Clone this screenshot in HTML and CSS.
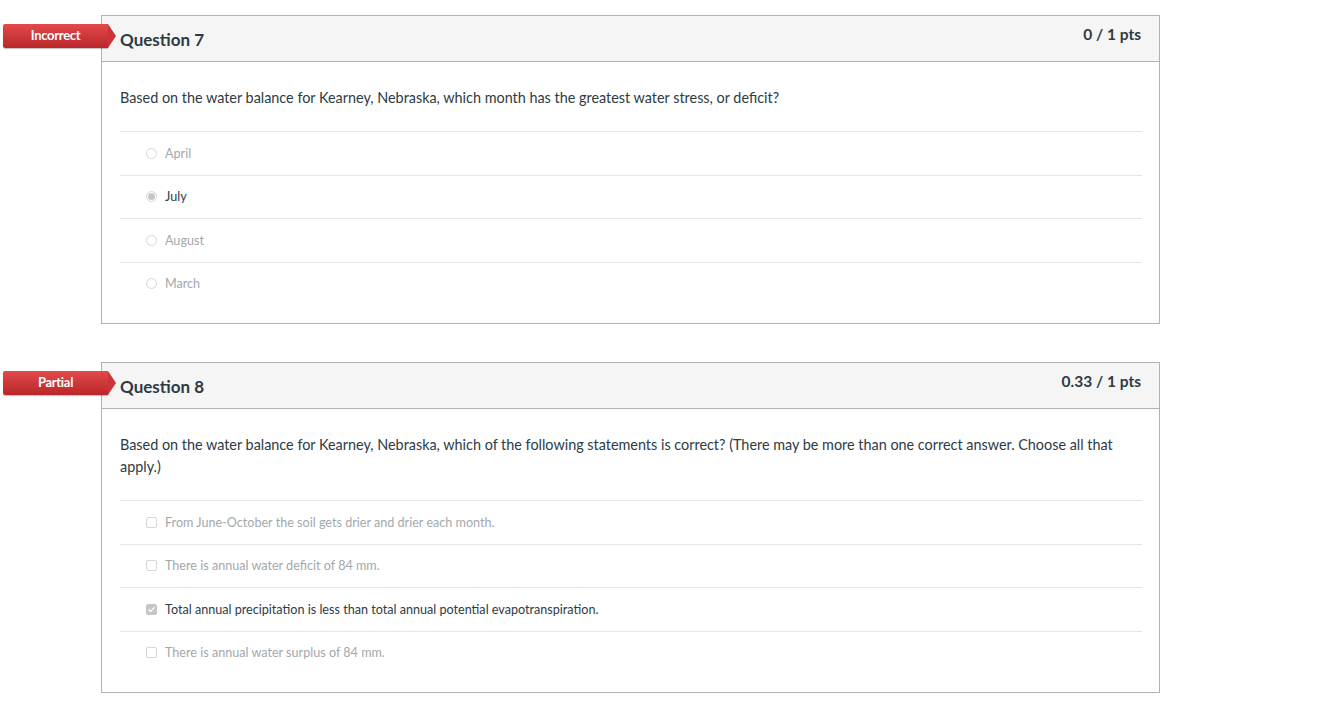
FILE: index.html
```html
<!DOCTYPE html>
<html>
<head>
<meta charset="utf-8">
<link rel="stylesheet" href="styles.css">
</head>
<body>
<main class="page">
  <section class="question">
    <div class="badge">Incorrect</div>
    <header class="q-header">
      <h2 class="q-title">Question 7</h2>
      <span class="q-pts">0 / 1 pts</span>
    </header>
    <div class="q-body">
      <p class="q-text">Based on the water balance for Kearney, Nebraska, which month has the greatest water stress, or deficit?</p>
      <ul class="answers">
        <li class="answer"><span class="radio"></span>April</li>
        <li class="answer selected"><span class="radio checked"></span>July</li>
        <li class="answer"><span class="radio"></span>August</li>
        <li class="answer"><span class="radio"></span>March</li>
      </ul>
    </div>
  </section>

  <section class="question">
    <div class="badge">Partial</div>
    <header class="q-header">
      <h2 class="q-title">Question 8</h2>
      <span class="q-pts">0.33 / 1 pts</span>
    </header>
    <div class="q-body">
      <p class="q-text">Based on the water balance for Kearney, Nebraska, which of the following statements is correct? (There may be more than one correct answer. Choose all that apply.)</p>
      <ul class="answers">
        <li class="answer"><span class="check"></span>From June-October the soil gets drier and drier each month.</li>
        <li class="answer"><span class="check"></span>There is annual water deficit of 84 mm.</li>
        <li class="answer selected"><span class="check checked"><svg viewBox="0 0 11 11" width="11" height="11"><path d="M2.6 5.6 L4.6 7.6 L8.4 3.4" fill="none" stroke="#fff" stroke-width="1.4"/></svg></span>Total annual precipitation is less than total annual potential evapotranspiration.</li>
        <li class="answer"><span class="check"></span>There is annual water surplus of 84 mm.</li>
      </ul>
    </div>
  </section>
</main>
</body>
</html>
```

FILE: styles.css
```css
html, body {
  margin: 0;
  padding: 0;
  background: #fff;
}
body {
  font-family: Lato, "Open Sans", sans-serif;
  color: #2d3b45;
}
.page {
  padding: 15px 0 0 101px;
  display: flex;
  flex-direction: column;
  gap: 38px;
}
.question {
  position: relative;
  width: 1059px;
  box-sizing: border-box;
  border: 1px solid #aeb2b5;
}
.badge {
  position: absolute;
  left: -99px;
  top: 8px;
  width: 105px;
  height: 24px;
  box-sizing: border-box;
  background: linear-gradient(#e34a4a, #b9262a);
  color: #fff;
  font-weight: 700;
  font-size: 13px;
  letter-spacing: -0.3px;
  line-height: 23px;
  text-align: center;
  border-radius: 2px 0 0 2px;
  box-shadow: 0 1px 1px rgba(0,0,0,0.25);
}
.badge::after {
  content: "";
  position: absolute;
  right: -8px;
  top: 0;
  border-left: 8px solid #cb3538;
  border-top: 12px solid transparent;
  border-bottom: 12px solid transparent;
}
.q-header {
  background: #f5f5f5;
  border-bottom: 1px solid #aeb2b5;
  height: 45px;
  display: flex;
  justify-content: space-between;
  align-items: flex-start;
  padding: 0 18px 0 18px;
}
.q-title {
  margin: 0;
  font-size: 17px;
  font-weight: 700;
  line-height: 20px;
  padding-top: 14px;
  color: #2d3b45;
}
.q-pts {
  font-size: 15.5px;
  font-weight: 700;
  line-height: 20px;
  padding-top: 8px;
  color: #2d3b45;
}
.q-body {
  padding: 25px 17px 18px 18px;
}
.q-text {
  margin: 0 0 22px;
  font-size: 14.4px;
  line-height: 22px;
}
.answers {
  list-style: none;
  margin: 0;
  padding: 0;
}
.answer {
  border-top: 1px solid #e3e5e7;
  height: 43.5px;
  box-sizing: border-box;
  display: flex;
  align-items: center;
  padding-left: 26px;
  font-size: 12.6px;
  color: #a3a8ac;
}
.answer.selected {
  color: #2d3b45;
}
.radio {
  width: 11px;
  height: 11px;
  box-sizing: border-box;
  border: 1px solid #d4d6d8;
  border-radius: 50%;
  margin-right: 8px;
  display: inline-flex;
  align-items: center;
  justify-content: center;
  background: #fff;
}
.radio.checked::after {
  content: "";
  width: 7px;
  height: 7px;
  border-radius: 50%;
  background: #c4c6c8;
}
.check {
  width: 11px;
  height: 11px;
  box-sizing: border-box;
  border: 1px solid #d4d6d8;
  border-radius: 2px;
  margin-right: 8px;
  display: inline-flex;
  align-items: center;
  justify-content: center;
  background: #fff;
}
.check.checked {
  background: #c4c6c8;
  border-color: #c4c6c8;
}
.check svg {
  display: block;
  flex: none;
}
```
